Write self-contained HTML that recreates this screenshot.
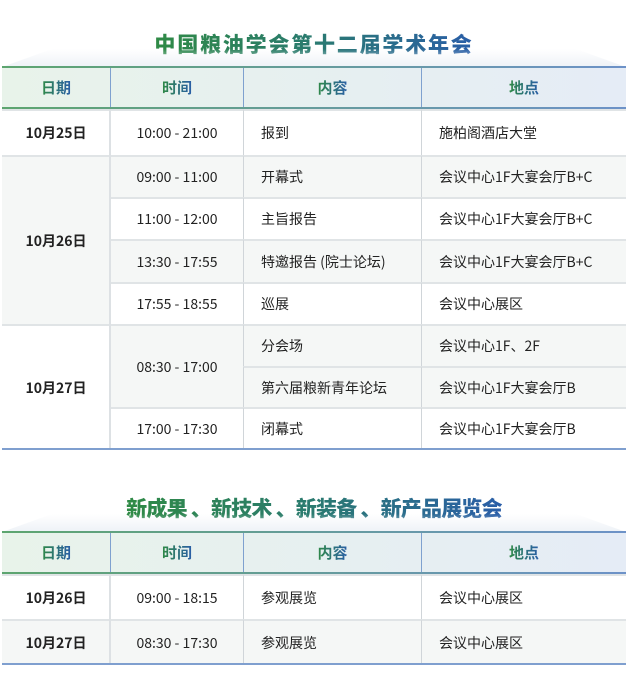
<!DOCTYPE html>
<html><head><meta charset="utf-8"><style>
*{margin:0;padding:0;box-sizing:border-box}
body{width:628px;height:695px;background:#fff;position:relative;overflow:hidden;font-family:"Noto Sans CJK SC","Liberation Sans",sans-serif;color:#222}
.t{position:absolute;left:0;width:628px;text-align:center;font-weight:900;font-size:21px;font-family:"Noto Sans CJK SC","WenQuanYi Zen Hei",sans-serif;white-space:nowrap;line-height:28px}
.t span{background:linear-gradient(90deg,#2f8a45,#2a7a70 50%,#2a5ea8);-webkit-background-clip:text;background-clip:text;color:transparent}
.sh{position:absolute;left:2px;width:624px;height:18px;background:linear-gradient(180deg,rgba(255,255,255,0),#eef2f7);clip-path:polygon(8% 0,92% 0,100% 100%,0 100%)}
.hd{position:absolute;left:2px;width:624px;height:43px;background:linear-gradient(90deg,#e8f3ea,#e5ecf6);border-top:2px solid #a9ccb3;border-bottom:2px solid;border-image:linear-gradient(90deg,#5da56f,#6d92c8) 1}
.hd div{position:absolute;top:0;height:39px;display:flex;align-items:center;justify-content:center;font-weight:bold;font-size:15px;font-family:"Noto Sans CJK SC",sans-serif}
.hd div span{background:linear-gradient(90deg,#2f8a45,#2a5ea8);-webkit-background-clip:text;background-clip:text;color:transparent}
.hd div+div{border-left:1px solid #7fa1cf}
.c{position:absolute;display:flex;align-items:center;font-size:14px;border-top:2px solid #e0e4e6;border-left:1px solid #d0d5d9}
.g{background:#f5f7f6}
.ctr{justify-content:center}
.l{padding-left:17px}
.d{font-weight:600;border-left:none}
.bl{position:absolute;left:2px;width:624px;height:2px;background:#7f9fcf}
.cl{position:absolute;width:2px;background:#dde1e4}
</style></head><body>

<div class="t" style="top:30px;letter-spacing:1.8px"><span>中国粮油学会第十二届学术年会</span></div>
<div class="sh" style="top:49px"></div>
<div class="hd" style="top:66px">
<div style="left:0;width:108px"><span>日期</span></div>
<div style="left:108px;width:133px"><span>时间</span></div>
<div style="left:241px;width:178px"><span>内容</span></div>
<div style="left:419px;width:205px"><span>地点</span></div>
</div>

<div class="c d ctr" style="left:2px;top:109px;width:108px;height:46px">10月25日</div>
<div class="c d ctr g" style="left:2px;top:155px;width:108px;height:169px">10月26日</div>
<div class="c d ctr" style="left:2px;top:324px;width:108px;height:125px">10月27日</div>

<div class="c ctr" style="left:110px;top:109px;width:133px;height:46px">10:00 - 21:00</div>
<div class="c ctr g" style="left:110px;top:155px;width:133px;height:42px">09:00 - 11:00</div>
<div class="c ctr" style="left:110px;top:197px;width:133px;height:42px">11:00 - 12:00</div>
<div class="c ctr g" style="left:110px;top:239px;width:133px;height:43px">13:30 - 17:55</div>
<div class="c ctr" style="left:110px;top:282px;width:133px;height:42px">17:55 - 18:55</div>
<div class="c ctr g" style="left:110px;top:324px;width:133px;height:83px">08:30 - 17:00</div>
<div class="c ctr" style="left:110px;top:407px;width:133px;height:42px">17:00 - 17:30</div>

<div class="c l" style="left:243px;top:109px;width:178px;height:46px">报到</div>
<div class="c l g" style="left:243px;top:155px;width:178px;height:42px">开幕式</div>
<div class="c l" style="left:243px;top:197px;width:178px;height:42px">主旨报告</div>
<div class="c l g" style="left:243px;top:239px;width:178px;height:43px">特邀报告 (院士论坛)</div>
<div class="c l" style="left:243px;top:282px;width:178px;height:42px">巡展</div>
<div class="c l g" style="left:243px;top:324px;width:178px;height:42px">分会场</div>
<div class="c l g" style="left:243px;top:366px;width:178px;height:41px">第六届粮新青年论坛</div>
<div class="c l" style="left:243px;top:407px;width:178px;height:42px">闭幕式</div>

<div class="c l" style="left:421px;top:109px;width:205px;height:46px">施柏阁酒店大堂</div>
<div class="c l g" style="left:421px;top:155px;width:205px;height:42px">会议中心1F大宴会厅B+C</div>
<div class="c l" style="left:421px;top:197px;width:205px;height:42px">会议中心1F大宴会厅B+C</div>
<div class="c l g" style="left:421px;top:239px;width:205px;height:43px">会议中心1F大宴会厅B+C</div>
<div class="c l" style="left:421px;top:282px;width:205px;height:42px">会议中心展区</div>
<div class="c l g" style="left:421px;top:324px;width:205px;height:42px">会议中心1F、2F</div>
<div class="c l g" style="left:421px;top:366px;width:205px;height:41px">会议中心1F大宴会厅B</div>
<div class="c l" style="left:421px;top:407px;width:205px;height:42px">会议中心1F大宴会厅B</div>
<div class="cl" style="left:109px;top:109px;height:340px"></div>
<div class="bl" style="top:448px"></div>

<div class="t" style="top:494px;letter-spacing:-0.8px"><span>新成果 、新技术 、新装备 、新产品展览会</span></div>
<div class="sh" style="top:514px"></div>
<div class="hd" style="top:531px">
<div style="left:0;width:108px"><span>日期</span></div>
<div style="left:108px;width:133px"><span>时间</span></div>
<div style="left:241px;width:178px"><span>内容</span></div>
<div style="left:419px;width:205px"><span>地点</span></div>
</div>
<div class="c d ctr" style="left:2px;top:574px;width:108px;height:45px">10月26日</div>
<div class="c d ctr g" style="left:2px;top:619px;width:108px;height:45px">10月27日</div>
<div class="c ctr" style="left:110px;top:574px;width:133px;height:45px">09:00 - 18:15</div>
<div class="c ctr g" style="left:110px;top:619px;width:133px;height:45px">08:30 - 17:30</div>
<div class="c l" style="left:243px;top:574px;width:178px;height:45px">参观展览</div>
<div class="c l g" style="left:243px;top:619px;width:178px;height:45px">参观展览</div>
<div class="c l" style="left:421px;top:574px;width:205px;height:45px">会议中心展区</div>
<div class="c l g" style="left:421px;top:619px;width:205px;height:45px">会议中心展区</div>
<div class="cl" style="left:109px;top:574px;height:90px"></div>
<div class="bl" style="top:663px"></div>
</body></html>
